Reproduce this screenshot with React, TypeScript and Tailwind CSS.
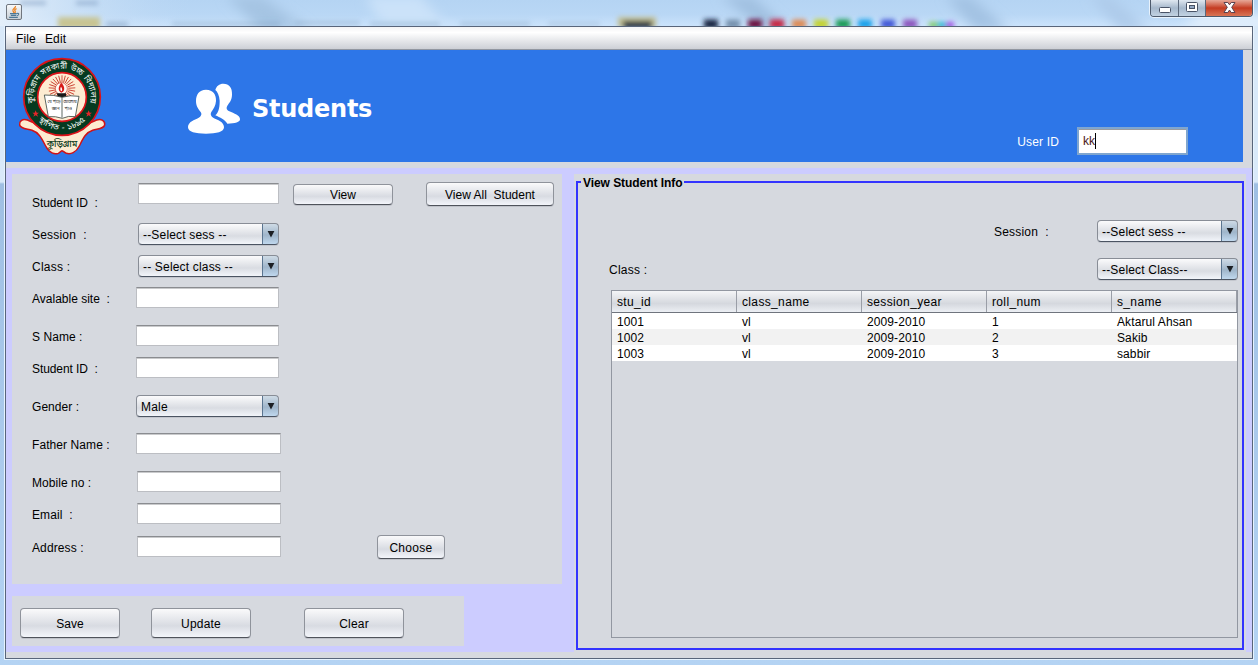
import type { ReactNode } from "react";

function TextField({ className }: { className: string }) {
  return (
    <input
      type="text"
      className={`block h-[21px] shrink-0 border border-[#bcbec3] border-t-[#8a8c90] bg-white shadow-[inset_0_1px_0_#c9cacc] outline-none ${className}`}
    />
  );
}

function Combo({ label, className }: { label: string; className: string }) {
  return (
    <div
      className={`flex h-[22px] shrink-0 overflow-hidden rounded-[4px] border border-[#888d96] border-b-[#4b5462] bg-linear-to-b from-[#fbfbfc] via-[#d9dce2] via-60% to-[#f2f5fa] shadow-[0_1px_0_#c3c6cd] ${className}`}
    >
      <span className="flex-1 pl-1 leading-[23px] tracking-[0.18px] whitespace-pre">{label}</span>
      <span className="-my-px -mr-px flex w-[17px] items-center justify-center rounded-r-[4px] border border-[#5b7590] border-b-[#2f475f] bg-linear-to-b from-[#cfdbe6] via-[#9fb5ca] via-55% to-[#c0d8ee]">
        <svg width="8" height="7" viewBox="0 0 8 7">
          <path d="M0.6 0H7.4L4 6.6Z" fill="#1c1f24" />
        </svg>
      </span>
    </div>
  );
}

function Button({ children, className }: { children: ReactNode; className: string }) {
  return (
    <button
      className={`flex shrink-0 items-center justify-center rounded-[4px] border border-[#8f939b] border-b-[#4f535b] bg-linear-to-b from-[#fafafb] via-[#d8dbe2] via-60% to-[#f3f5fa] whitespace-pre shadow-[0_1px_0_#bfc2c9] ${className}`}
    >
      {children}
    </button>
  );
}

function SchoolCrest() {
  const rays = Array.from({ length: 25 }, (_, i) => (i * 360) / 25);
  return (
    <svg width="90" height="104" viewBox="54 162 270 312" className="shrink-0">
      <path
        d="M82 360C66 355 57 365 59 375C61 386 78 386 96 391C118 398 126 418 137 438C148 460 164 464 175 460C182 457 184 452 186 452C188 452 192 457 199 460C212 464 228 458 238 438C248 418 256 398 278 391C296 386 312 386 314 375C316 363 304 355 290 360C270 368 250 380 240 388L132 388C122 380 102 368 82 360Z"
        fill="#fdebd0"
        stroke="#d01217"
        strokeWidth="4.5"
      />
      <circle cx="186" cy="291" r="115" fill="#063a20" stroke="#dc1218" strokeWidth="5" />
      <circle cx="186" cy="291" r="73" fill="#fdecd2" stroke="#dc1218" strokeWidth="5" />
      <g stroke="#c93a2d" strokeWidth="2.6">
        {rays.map((a) => (
          <line key={a} x1="186" y1="247" x2="186" y2="226" transform={`rotate(${a} 186 266)`} />
        ))}
      </g>
      <circle cx="184" cy="266" r="18" fill="#fffaf2" stroke="#c93a2d" strokeWidth="2" />
      <path d="M184 248C196 260 195 274 184 278C174 273 173 261 184 248Z" fill="#d71a18" />
      <path d="M183 260C188 266 187 272 184 274C180 271 180 265 183 260Z" fill="#fff" />
      <path d="M170 280H198V291H174Z" fill="#181818" />
      <path d="M133 285Q162 284 186 292Q210 284 237 289L226 350Q205 346 187 355Q167 348 145 350Z" fill="#fff" stroke="#3c4a44" strokeWidth="2.5" />
      <path d="M186 292V353" stroke="#3c4a44" strokeWidth="2.5" />
      <g fontFamily="'Noto Sans Bengali','Noto Sans',sans-serif" fill="#252525" fontSize="13" textAnchor="middle">
        <text>
          <tspan x="162" y="308">যে পড়ে</tspan>
          <tspan x="167" y="329">জ্ঞান</tspan>
        </text>
        <text>
          <tspan x="210" y="308">আলোয়</tspan>
          <tspan x="205" y="329">পাও</tspan>
        </text>
      </g>
      <path id="crest-top" d="M102 310A86 86 0 1 1 270 310" fill="none" />
      <path id="crest-bottom" d="M104 348A100 100 0 0 0 268 348" fill="none" />
      <g fontFamily="'Noto Sans Bengali','Noto Sans',sans-serif" fill="#fff" fontSize="25" textAnchor="middle">
        <text wordSpacing="3">
          <textPath href="#crest-top" startOffset="50%" textLength="304" lengthAdjust="spacingAndGlyphs">
            কুড়িগ্রাম সরকারী উচ্চ বিদ্যালয়
          </textPath>
        </text>
        <text wordSpacing="3">
          <textPath href="#crest-bottom" startOffset="50%" textLength="158" lengthAdjust="spacingAndGlyphs">
            স্থাপিত - ১৮৯৫
          </textPath>
        </text>
      </g>
      <g fill="#e3262a">
        <path id="crest-star" d="M107 331L110 338L117 338L111 343L114 350L107 346L100 350L103 343L97 338L104 338Z" />
        <use href="#crest-star" x="159" />
      </g>
      <text
        x="186"
        y="440"
        textAnchor="middle"
        fontFamily="'Noto Sans Bengali','Noto Sans',sans-serif"
        fontWeight="500"
        fontSize="29"
        textLength="92"
        lengthAdjust="spacingAndGlyphs"
        fill="#0b3c22"
      >
        কুড়িগ্রাম
      </text>
    </svg>
  );
}

function PeopleIcon() {
  return (
    <svg width="54" height="52" viewBox="51 39 162 156" fill="#fff" className="shrink-0">
      <path d="M108 59C130 59 139 74 138 93C137 108 131 116 124 126C120 133 123 141 135 146C150 152 162 158 162 172C162 186 140 191 108 191C76 191 54 186 54 172C54 158 66 152 81 146C93 141 97 133 92 126C84 116 78 108 78 93C78 74 87 59 108 59Z" />
      <path d="M136 60C139 48 148 41 160 41C178 41 187 54 186 73C186 88 181 96 174 104C168 112 168 119 178 124C192 130 210 137 210 147C211 157 195 160 172 161C165 150 150 142 136 136C148 126 149 105 149 92C148 76 142 65 136 60Z" />
    </svg>
  );
}

const swatches = [
  [704, "#12233f"],
  [726, "#7590ac"],
  [748, "#6b0f3c"],
  [770, "#c7203f"],
  [792, "#dd8a55"],
  [814, "#c3d12c"],
  [836, "#189a55"],
  [858, "#12a0ea"],
  [881, "#4056d6"],
  [903, "#8c55bd"],
] as const;

function GlassBackdrop() {
  return (
    <svg width="1258" height="26" className="absolute top-0 left-0">
      <defs>
        <linearGradient id="glass" x1="0" x2="0" y1="0" y2="1">
          <stop offset="0" stopColor="#b5d4f3" />
          <stop offset="0.55" stopColor="#b9d7f5" />
          <stop offset="1" stopColor="#cbe3fb" />
        </linearGradient>
        <linearGradient id="glassLeft">
          <stop offset="0" stopColor="#e4effa" />
          <stop offset="1" stopColor="#c0daf4" stopOpacity="0" />
        </linearGradient>
        <filter id="soft" x="-30%" y="-60%" width="160%" height="220%">
          <feGaussianBlur stdDeviation="2.4" />
        </filter>
        <filter id="wide" x="-30%" y="-60%" width="160%" height="220%">
          <feGaussianBlur stdDeviation="6" />
        </filter>
      </defs>
      <rect width="1258" height="26" fill="url(#glass)" />
      <rect width="190" height="26" fill="url(#glassLeft)" />
      <g filter="url(#wide)">
        <path d="M225 -4H262L310 30H262Z" fill="#a5c4e3" />
        <path d="M365 -4H420L450 30H385Z" fill="#cbe2f9" />
        <path d="M720 -4H752L790 30H765Z" fill="#a0c0e0" />
        <path d="M945 -4H970L1010 30H975Z" fill="#a3c2e3" />
        <path d="M1090 -4H1110L1150 30H1120Z" fill="#aecbea" />
        <path d="M1200 14H1270V30H1180Z" fill="#e2effc" />
      </g>
      <g filter="url(#soft)">
        <path d="M20 3H46M76 3H98" stroke="#7f9bc0" strokeWidth="4" opacity=".6" />
        <rect x="58" y="17" width="42" height="12" fill="#c8c493" />
        <rect x="106" y="22" width="22" height="5" fill="#7795b8" opacity=".5" />
        <path d="M172 24H280M295 23H360M370 24H440M460 24H530" stroke="#6f8fb3" strokeWidth="4" opacity=".35" />
        <path d="M548 24H600" stroke="#7d99b7" strokeWidth="3" opacity=".4" />
        <rect x="618" y="17" width="38" height="11" fill="#c0bd92" />
        <rect x="623" y="21" width="29" height="7" fill="#1d2a3a" />
        {swatches.map(([x, color]) => (
          <rect key={x} x={x} y="19.5" width="14" height="9" fill={color} />
        ))}
        <rect x="929" y="22" width="9" height="6" fill="#7fc96a" />
        <rect x="938" y="22" width="8" height="6" fill="#27b9d8" />
        <rect x="946" y="22" width="8" height="6" fill="#a04be0" />
      </g>
    </svg>
  );
}

function TitleBar() {
  return (
    <div className="relative flex h-[26px] shrink-0 justify-between">
      <GlassBackdrop />
      <div className="relative mt-1 ml-1.5 flex size-4 items-center justify-center rounded-[2px] border border-[#70767e] bg-linear-to-b from-[#f8f9fa] to-[#c7cfd6]">
        <svg width="14" height="14" viewBox="0 0 14 14" fill="none">
          <path d="M8.5 1C9 3 5 3.8 6 6C6.4 6.8 7 7.2 6.6 8M9.6 3.6C7.4 4.4 7.4 5.2 8.2 6.2C8.5 6.8 8.2 7.4 7.8 8" stroke="#ec8423" strokeWidth="1.3" />
          <path d="M3 8.6H9.8M3.8 10.4H9.2M2.2 12.4H10.8M10 8.5C12.6 7.8 12 10.4 9.8 10.8" stroke="#4c7896" strokeWidth="1.1" />
        </svg>
      </div>
      <div className="relative mr-[5px] flex h-[17px] overflow-hidden rounded-b-[4px] border border-t-0 border-[#4d5a6c] shadow-[0_0_0_1px_#e8f2fc]">
        <div className="flex w-[28px] items-center justify-center border-r border-[#5b687b] bg-linear-to-b from-[#dfe7f0] via-[#a6b8cc] via-50% to-[#c2d2e2] pt-1">
          <svg width="12" height="6" viewBox="0 0 12 6">
            <rect x=".5" y=".5" width="11" height="5" rx="1" fill="#fff" stroke="#495366" />
          </svg>
        </div>
        <div className="flex w-[27px] items-center justify-center border-r border-[#5b687b] bg-linear-to-b from-[#dfe7f0] via-[#a6b8cc] via-50% to-[#c2d2e2] pb-0.5">
          <svg width="12" height="10" viewBox="0 0 12 10">
            <rect x=".5" y=".5" width="11" height="9" rx="1" fill="#fff" stroke="#495366" />
            <rect x="3.5" y="3.5" width="5" height="3" fill="#93a8c4" stroke="#495366" />
          </svg>
        </div>
        <div className="flex w-[46px] items-center justify-center bg-linear-to-b from-[#e6a898] via-[#c43a20] via-50% to-[#d87455] pb-0.5">
          <svg width="13" height="11" viewBox="0 0 13 11">
            <path d="M1 .5H4.8L6.5 2.8L8.2 .5H12L8.7 5.3L12 10.5H8.2L6.5 8L4.8 10.5H1L4.3 5.3Z" fill="#fff" stroke="#5a4450" />
          </svg>
        </div>
      </div>
    </div>
  );
}

const fields = [
  { label: "Session  :", combo: "--Select sess --", row: "h-8", field: "ml-[2px] w-[141px]", track: "tracking-[0.2px]" },
  { label: "Class :", combo: "-- Select class --", row: "h-8", field: "ml-[2px] w-[141px]", track: "tracking-[0.25px]" },
  { label: "Avalable site  :", row: "h-[38px]", field: "w-[143px]", track: "tracking-normal" },
  { label: "S Name :", row: "h-8", field: "w-[143px]", track: "tracking-[0.05px]" },
  { label: "Student ID  :", row: "h-[38px]", field: "w-[143px]", track: "tracking-[-0.08px]" },
  { label: "Gender :", combo: "Male", row: "h-[38px]", field: "w-[143px]", track: "tracking-[0.05px]" },
  { label: "Father Name :", row: "h-[38px]", field: "w-[145px]", track: "tracking-[0.08px]" },
  { label: "Mobile no :", row: "h-8", field: "ml-px w-[144px]", track: "tracking-[0.05px]" },
  { label: "Email  :", row: "h-[33px]", field: "ml-px w-[144px]", track: "tracking-[0.1px]" },
];

function StudentForm() {
  return (
    <section className="h-[410px] w-[550px] bg-[#d6d9df] pt-[9px] pl-5">
      <div className="flex h-10">
        <span className="w-[106px] pt-3 leading-4 tracking-[-0.08px] whitespace-pre">Student ID  :</span>
        <TextField className="w-[141px]" />
        <Button className="mt-px ml-[14px] h-[21px] w-[100px]">View</Button>
        <Button className="-mt-px ml-[33px] h-6 w-[128px] pt-[2px]">{"View All  Student"}</Button>
      </div>
      {fields.map(({ label, combo, row, field, track }, i) => (
        <div key={i} className={`flex ${row}`}>
          <span className={`w-[104px] pt-1 leading-4 whitespace-pre ${track}`}>{label}</span>
          {combo ? <Combo label={combo} className={field} /> : <TextField className={field} />}
        </div>
      ))}
      <div className="flex">
        <span className="w-[105px] pt-1 leading-4 tracking-[0.12px]">Address :</span>
        <TextField className="w-[144px]" />
        <Button className="-mt-px ml-24 h-6 w-[68px] pt-[2px] tracking-[0.3px]">Choose</Button>
      </div>
    </section>
  );
}

const columns = ["stu_id", "class_name", "session_year", "roll_num", "s_name"];
const students = [
  ["1001", "vl", "2009-2010", "1", "Aktarul Ahsan"],
  ["1002", "vl", "2009-2010", "2", "Sakib"],
  ["1003", "vl", "2009-2010", "3", "sabbir"],
];

function StudentInfo() {
  return (
    <section className="h-[478px] w-[672px] bg-[#d6d9df] pl-[2px]">
      <fieldset className="h-[476px] w-[668px] border-2 border-[#3333ff]">
        <legend className="ml-[3px] h-4 px-[2px] leading-[19px] font-bold tracking-[-0.06px]">View Student Info</legend>
        <div className="mt-[30px] flex justify-between pr-1 pl-[416px]">
          <span className="pt-1 leading-4 tracking-[0.2px] whitespace-pre">Session  :</span>
          <Combo label="--Select sess --" className="w-[141px]" />
        </div>
        <div className="mt-4 flex justify-between pr-1 pl-[31px]">
          <span className="pt-1 leading-4 tracking-[0.25px]">Class :</span>
          <Combo label="--Select Class--" className="w-[141px]" />
        </div>
        <div className="mt-[10px] ml-[33px] h-[348px] w-[627px] border border-[#9297a1]">
          <div className="grid h-[22px] grid-cols-5 border-b border-[#6f747d] bg-linear-to-b from-[#f4f5f7] via-[#d5d8de] via-60% to-[#eceff4]">
            {columns.map((c) => (
              <span key={c} className="h-[21px] border-r border-[#9a9ea7] pl-[5px] leading-[23px] tracking-[0.35px]">
                {c}
              </span>
            ))}
          </div>
          {students.map((row) => (
            <div key={row[0]} className="grid h-4 grid-cols-5 bg-white leading-[19px] tracking-[0.1px] odd:bg-[#f2f2f2]">
              {row.map((cell, i) => (
                <span key={i} className="h-4 pl-[5px]">
                  {cell}
                </span>
              ))}
            </div>
          ))}
        </div>
      </fieldset>
    </section>
  );
}

export default function App() {
  return (
    <div className="flex h-[665px] w-[1258px] flex-col overflow-hidden bg-linear-to-b from-[#d9e9f9] from-[182px] via-[#9fbfe3] via-[184px] to-[#b4d3f3] font-['Liberation_Sans',Arial,sans-serif] text-[12px] text-black">
      <TitleBar />
      <div className="mx-[5px] flex h-[633px] flex-col border border-[#58657a] bg-[#d6d9df] shadow-[0_0_0_1px_#e6f3ff]">
        <nav className="flex h-[23px] shrink-0 gap-[9px] border-b border-[#9297a1] bg-linear-to-b from-[#f4f4f5] via-white via-25% to-[#cdd0d6] pl-[10px] leading-[25px] tracking-[0.15px]">
          <span>File</span>
          <span>Edit</span>
        </nav>
        <header className="flex h-[112px] w-[1237px] shrink-0 bg-[#2d76e8] text-white">
          <div className="mt-1 ml-3">
            <SchoolCrest />
          </div>
          <div className="mt-[33px] ml-[79px]">
            <PeopleIcon />
          </div>
          <h1 className="mt-[43px] ml-[11px] font-['DejaVu_Sans',Verdana,sans-serif] text-[24px] leading-8 font-bold tracking-[-0.25px]">
            Students
          </h1>
          <div className="mt-[77px] mr-[55px] ml-auto flex gap-[18px]">
            <span className="pt-[7px] leading-4 tracking-[0.15px]">User ID</span>
            <div className="flex h-7 w-[111px] items-center border-2 border-[#80a6cf] bg-white pl-1 text-[#4a1715] shadow-[inset_0_1px_0_#9a9c9f]">
              kk
              <i className="h-4 w-px bg-black" />
            </div>
          </div>
        </header>
        <main className="mt-[6px] flex h-[484px] shrink-0 justify-between bg-[#ccccff] pt-[6px] pr-[6px] pl-[6px]">
          <div>
            <StudentForm />
            <section className="mt-3 flex h-[50px] w-[452px] bg-[#d6d9df] pt-3 pl-2">
              <Button className="h-[30px] w-[100px] pt-[2px]">Save</Button>
              <Button className="ml-[31px] h-[30px] w-[100px] pt-[2px] tracking-[0.2px]">Update</Button>
              <Button className="ml-[53px] h-[30px] w-[100px] pt-[2px] tracking-[0.2px]">Clear</Button>
            </section>
          </div>
          <StudentInfo />
        </main>
      </div>
    </div>
  );
}
